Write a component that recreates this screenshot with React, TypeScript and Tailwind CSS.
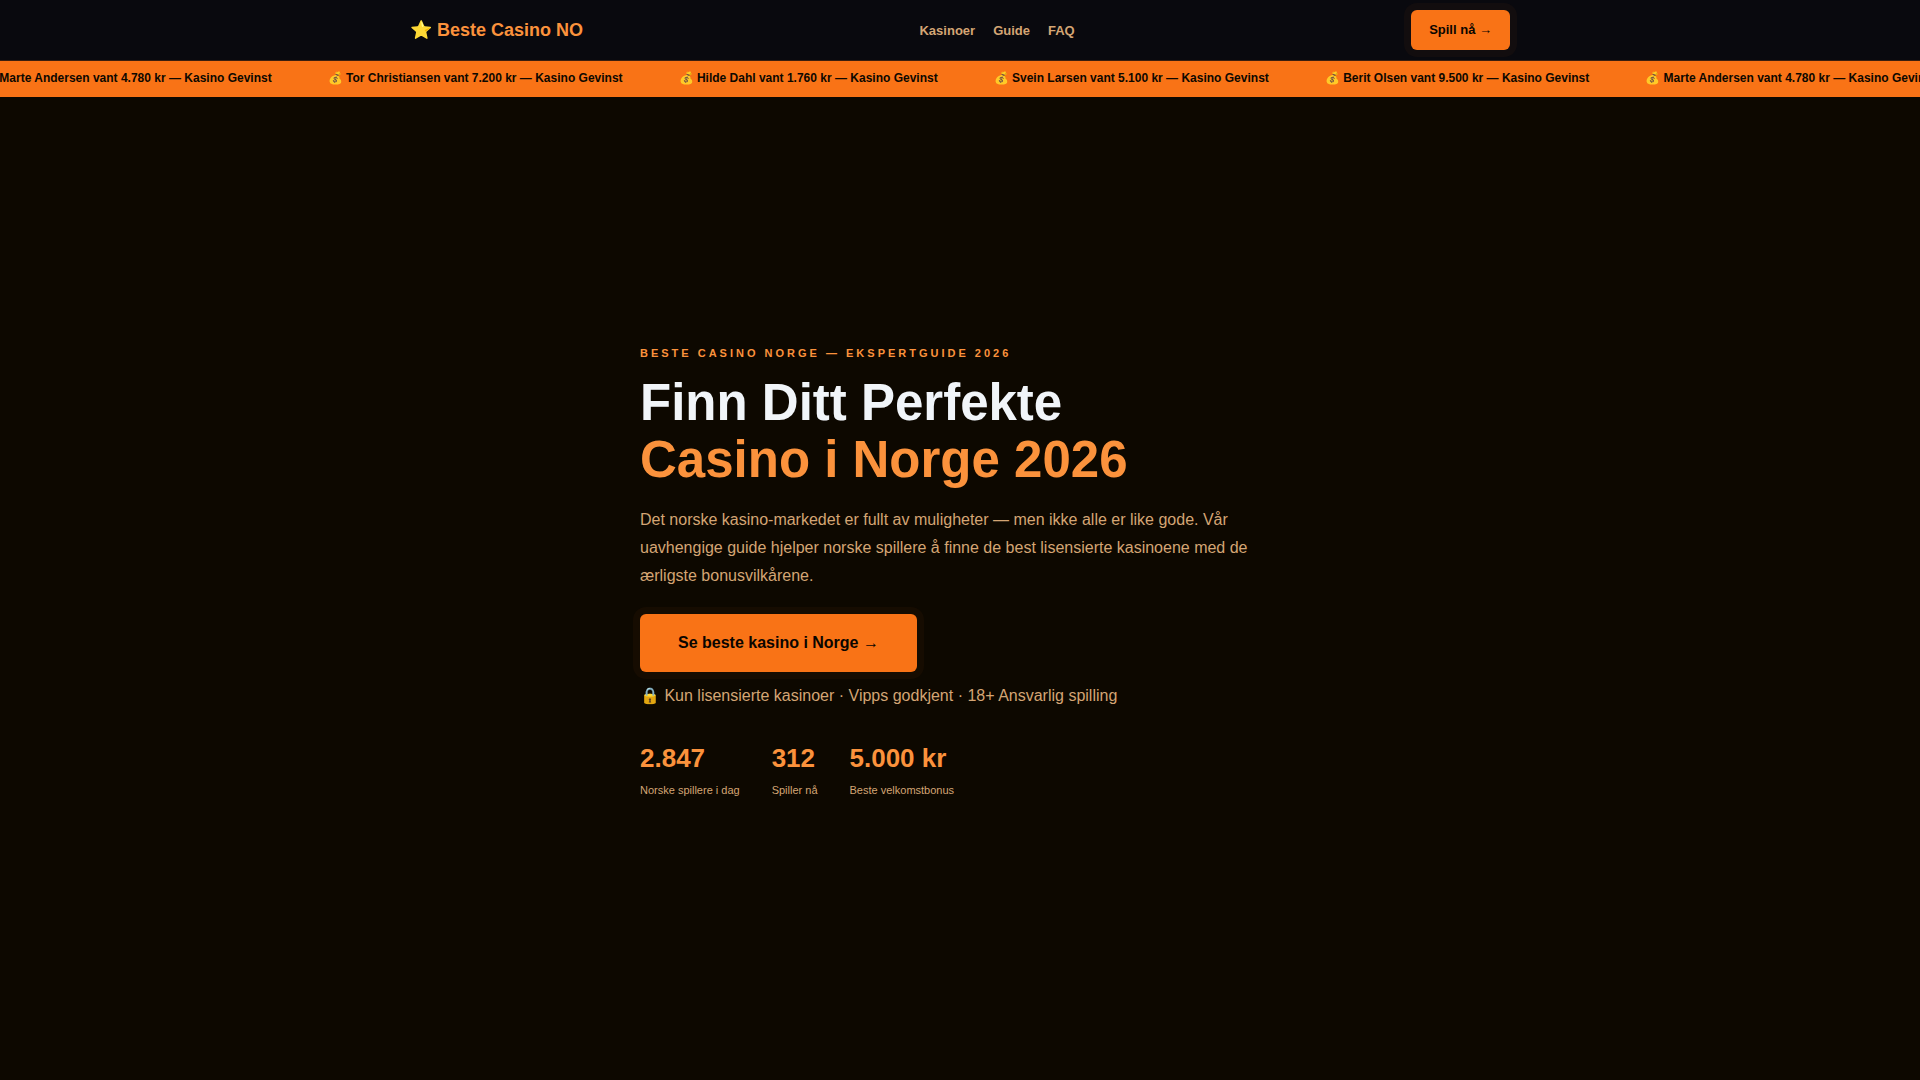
const wins = [
  { name: "Marte Andersen", amount: "4.780" },
  { name: "Tor Christiansen", amount: "7.200" },
  { name: "Hilde Dahl", amount: "1.760" },
  { name: "Svein Larsen", amount: "5.100" },
  { name: "Berit Olsen", amount: "9.500" },
  { name: "Marte Andersen", amount: "4.780" },
];

const stats = [
  { value: "2.847", label: "Norske spillere i dag" },
  { value: "312", label: "Spiller nå" },
  { value: "5.000 kr", label: "Beste velkomstbonus" },
];

const links = ["Kasinoer", "Guide", "FAQ"];

function Header() {
  return (
    <header className="border-b border-[#f97316]/20 bg-[#09090e]">
      <div className="mx-auto flex h-15 max-w-[1100px] items-center justify-between">
        <a href="#" className="text-lg font-bold text-[#fb923c]">
          ⭐ Beste Casino NO
        </a>
        <nav className="flex gap-[18px] pt-0.5 text-[13px] font-bold text-[#d4a574]">
          {links.map((l) => (
            <a key={l} href={"#" + l.toLowerCase()}>
              {l}
            </a>
          ))}
        </nav>
        <button className="h-10 rounded-md bg-[#f97316] px-[18px] text-[13px] font-bold text-[#0a0500] shadow-[0_0_0_7px_rgba(249,115,22,0.04)]">
          Spill nå →
        </button>
      </div>
    </header>
  );
}

function Ticker() {
  return (
    <div className="flex h-9 items-center overflow-hidden bg-[#f97316] pb-0.5 text-xs font-bold text-[#0d0800]">
      <ul className="-ml-[19px] flex shrink-0 gap-14 whitespace-nowrap">
        {wins.map((w, i) => (
          <li key={i}>
            💰 {w.name} vant {w.amount} kr — Kasino Gevinst
          </li>
        ))}
      </ul>
    </div>
  );
}

function Hero() {
  return (
    <main className="flex min-h-[88vh] items-center justify-center">
      <section className="w-full max-w-[640px]">
        <p className="mb-3 text-[11px] leading-[18px] font-bold tracking-[3px] text-[#fb923c] uppercase">
          Beste Casino Norge — Ekspertguide 2026
        </p>
        <h1 className="mb-[18px] text-[51px] leading-[57px] font-bold text-[#f1f5f9]">
          Finn Ditt Perfekte
          <span className="block text-[#fb923c]">Casino i Norge 2026</span>
        </h1>
        <p className="mb-6 text-base leading-7 text-[#d4a574]">
          Det norske kasino-markedet er fullt av muligheter — men ikke alle er like gode. Vår uavhengige guide hjelper
          norske spillere å finne de best lisensierte kasinoene med de ærligste bonusvilkårene.
        </p>
        <button className="h-[58px] rounded-md bg-[#f97316] px-[38px] text-base font-bold text-[#0a0500] shadow-[0_0_0_7px_rgba(249,115,22,0.04)]">
          Se beste kasino i Norge →
        </button>
        <p className="mt-2.5 text-base leading-7 text-[#d4a574]">
          🔒 Kun lisensierte kasinoer · Vipps godkjent · 18+ Ansvarlig spilling
        </p>
        <dl className="mt-6.5 flex gap-8">
          {stats.map((s) => (
            <div key={s.label} className="flex flex-col-reverse">
              <dt className="text-[11px] leading-5 text-[#d4a574]">{s.label}</dt>
              <dd className="text-[26px] leading-[44px] font-bold text-[#fb923c]">{s.value}</dd>
            </div>
          ))}
        </dl>
      </section>
    </main>
  );
}

export default function App() {
  return (
    <div className="min-h-screen bg-[#0d0800] font-['Liberation_Sans',Arial,sans-serif]">
      <Header />
      <Ticker />
      <Hero />
    </div>
  );
}
